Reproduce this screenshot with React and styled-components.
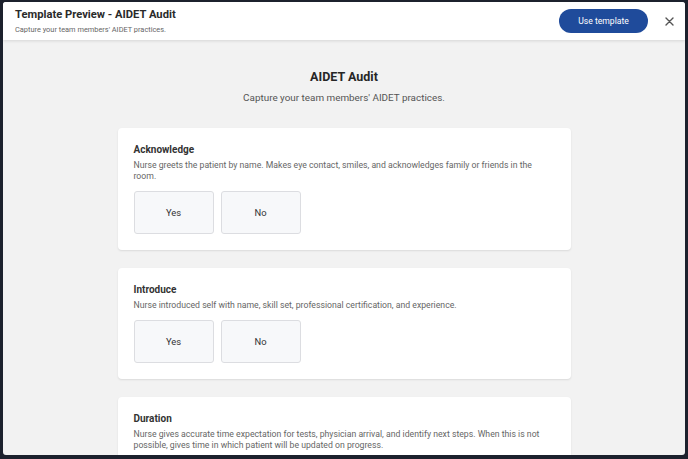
import React from 'react';
import styled, { createGlobalStyle } from 'styled-components';

const GlobalStyle = createGlobalStyle`
  html, body {
    margin: 0;
    padding: 0;
    width: 688px;
    height: 459px;
    overflow: hidden;
    background: #1c212d;
    font-family: Roboto, "Liberation Sans", sans-serif;
  }
  #root { height: 100%; }
`;

const Backdrop = styled.div`
  height: 459px;
  padding: 2px 3px 4px 3px;
  box-sizing: border-box;
  display: flex;
`;

const Modal = styled.div`
  flex: 1;
  display: flex;
  flex-direction: column;
  background: #f2f2f2;
  border-radius: 3px;
  overflow: hidden;
`;

const Header = styled.div`
  height: 38px;
  background: #fff;
  display: flex;
  align-items: center;
  padding: 0 11px 0 12px;
  box-shadow: 0 1px 3px rgba(0, 0, 0, 0.12);
  position: relative;
  z-index: 1;
  flex-shrink: 0;
`;

const HeaderText = styled.div`
  flex: 1;
  display: flex;
  flex-direction: column;
  gap: 4px;
`;

const HeaderTitle = styled.div`
  font-size: 11.2px;
  font-weight: 700;
  color: #2a2a2a;
`;

const HeaderSub = styled.div`
  font-size: 7.4px;
  color: #666;
`;

const UseButton = styled.button`
  background: #1f4b9b;
  color: #fff;
  border: none;
  border-radius: 12px;
  height: 24px;
  width: 89px;
  font-family: inherit;
  font-size: 8.6px;
  margin-right: 17px;
`;

const Close = styled.div`
  width: 9px;
  height: 9px;
  color: #555;
  display: flex;
`;

const Body = styled.div`
  flex: 1;
  overflow: hidden;
  display: flex;
  flex-direction: column;
  align-items: center;
  padding-top: 29px;
`;

const PageTitle = styled.div`
  font-size: 12.5px;
  font-weight: 700;
  color: #262626;
`;

const PageSub = styled.div`
  font-size: 9.9px;
  color: #555;
  margin-top: 8px;
  margin-bottom: 25px;
`;

const Card = styled.div`
  width: 453px;
  box-sizing: border-box;
  background: #fff;
  border-radius: 4px;
  box-shadow: 0 1px 2px rgba(0, 0, 0, 0.1);
  padding: 15px 18px 16px 16px;
  margin-bottom: 18px;
  flex-shrink: 0;
`;

const CardTitle = styled.div`
  font-size: 10px;
  font-weight: 700;
  color: #333;
  line-height: 14px;
`;

const CardDesc = styled.div`
  font-size: 8.7px;
  color: #666;
  line-height: 11px;
  margin-top: 3px;
`;

const Choices = styled.div`
  display: flex;
  gap: 7px;
  margin-top: 9px;
`;

const Choice = styled.div`
  width: 80px;
  height: 43px;
  box-sizing: border-box;
  border: 1px solid #dcdde1;
  border-radius: 3px;
  background: #f7f8fa;
  display: flex;
  align-items: center;
  justify-content: center;
  font-size: 9.4px;
  color: #333;
`;

const questions = [
  {
    title: 'Acknowledge',
    desc: 'Nurse greets the patient by name. Makes eye contact, smiles, and acknowledges family or friends in the room.',
  },
  {
    title: 'Introduce',
    desc: 'Nurse introduced self with name, skill set, professional certification, and experience.',
  },
  {
    title: 'Duration',
    desc: 'Nurse gives accurate time expectation for tests, physician arrival, and identify next steps. When this is not possible, gives time in which patient will be updated on progress.',
  },
];

export default function App() {
  return (
    <>
      <GlobalStyle />
      <Backdrop>
        <Modal>
          <Header>
            <HeaderText>
              <HeaderTitle>Template Preview - AIDET Audit</HeaderTitle>
              <HeaderSub>Capture your team members' AIDET practices.</HeaderSub>
            </HeaderText>
            <UseButton>Use template</UseButton>
            <Close>
              <svg width="9" height="9" viewBox="0 0 9 9">
                <path d="M1 1L8 8M8 1L1 8" stroke="currentColor" strokeWidth="1.4" strokeLinecap="round" />
              </svg>
            </Close>
          </Header>
          <Body>
            <PageTitle>AIDET Audit</PageTitle>
            <PageSub>Capture your team members' AIDET practices.</PageSub>
            {questions.map((q) => (
              <Card key={q.title}>
                <CardTitle>{q.title}</CardTitle>
                <CardDesc>{q.desc}</CardDesc>
                <Choices>
                  <Choice>Yes</Choice>
                  <Choice>No</Choice>
                </Choices>
              </Card>
            ))}
          </Body>
        </Modal>
      </Backdrop>
    </>
  );
}
